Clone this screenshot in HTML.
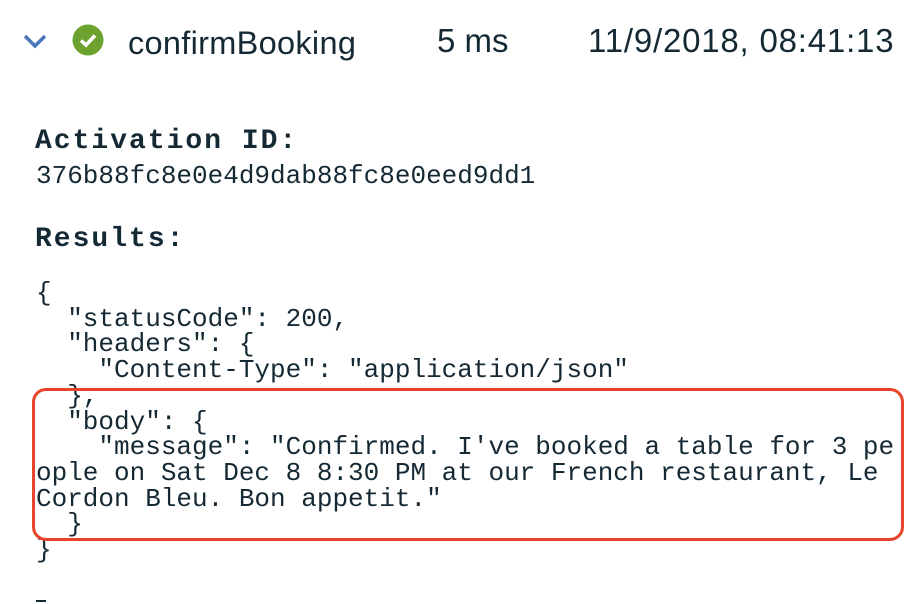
<!DOCTYPE html>
<html><head><style>
body{margin:0;width:906px;height:604px;background:#fff;overflow:hidden;position:relative;font-family:"Liberation Sans",sans-serif;color:#152935}
.a{position:absolute;white-space:pre}
.m{font-family:"Liberation Mono",monospace;font-size:26px;color:#152935}
.h{font-size:33px;color:#152935}
.b{font-family:"Liberation Mono",monospace;font-weight:bold;font-size:28px;letter-spacing:2px;color:#152935}
</style></head><body>
<svg class="a" style="left:22px;top:32px" width="28" height="20"><path d="M3 4 L13 14 L23 4" fill="none" stroke="#4a77b9" stroke-width="3.5"/></svg>
<svg class="a" style="left:72px;top:24px" width="32" height="32"><circle cx="16" cy="16" r="15.5" fill="#6ea22f"/><path d="M9 16.5 L14 21 L23 11.5" fill="none" stroke="#fff" stroke-width="3.5"/></svg>
<div class="a h" style="left:128px;top:25px;font-size:32.5px;letter-spacing:0.3px">confirmBooking</div>
<div class="a h" style="left:437px;top:22px">5 ms</div>
<div class="a h" style="left:588px;top:22px;letter-spacing:0.8px">11/9/2018, 08:41:13</div>
<div class="a b" style="left:35px;top:126px">Activation ID:</div>
<div class="a m" style="left:36px;top:161px">376b88fc8e0e4d9dab88fc8e0eed9dd1</div>
<div class="a b" style="left:35px;top:224px">Results:</div>
<div class="a m" style="left:36px;top:281px;line-height:25.7px">{
  "statusCode": 200,
  "headers": {
    "Content-Type": "application/json"
  },
  "body": {
    "message": "Confirmed. I've booked a table for 3 pe
ople on Sat Dec 8 8:30 PM at our French restaurant, Le
Cordon Bleu. Bon appetit."
  }
}</div>
<div class="a" style="left:32px;top:388px;width:866px;height:147px;border:3px solid #e8442b;border-radius:14px"></div>
<div class="a" style="left:36px;top:600px;width:10px;height:2px;background:#152935"></div>
</body></html>
